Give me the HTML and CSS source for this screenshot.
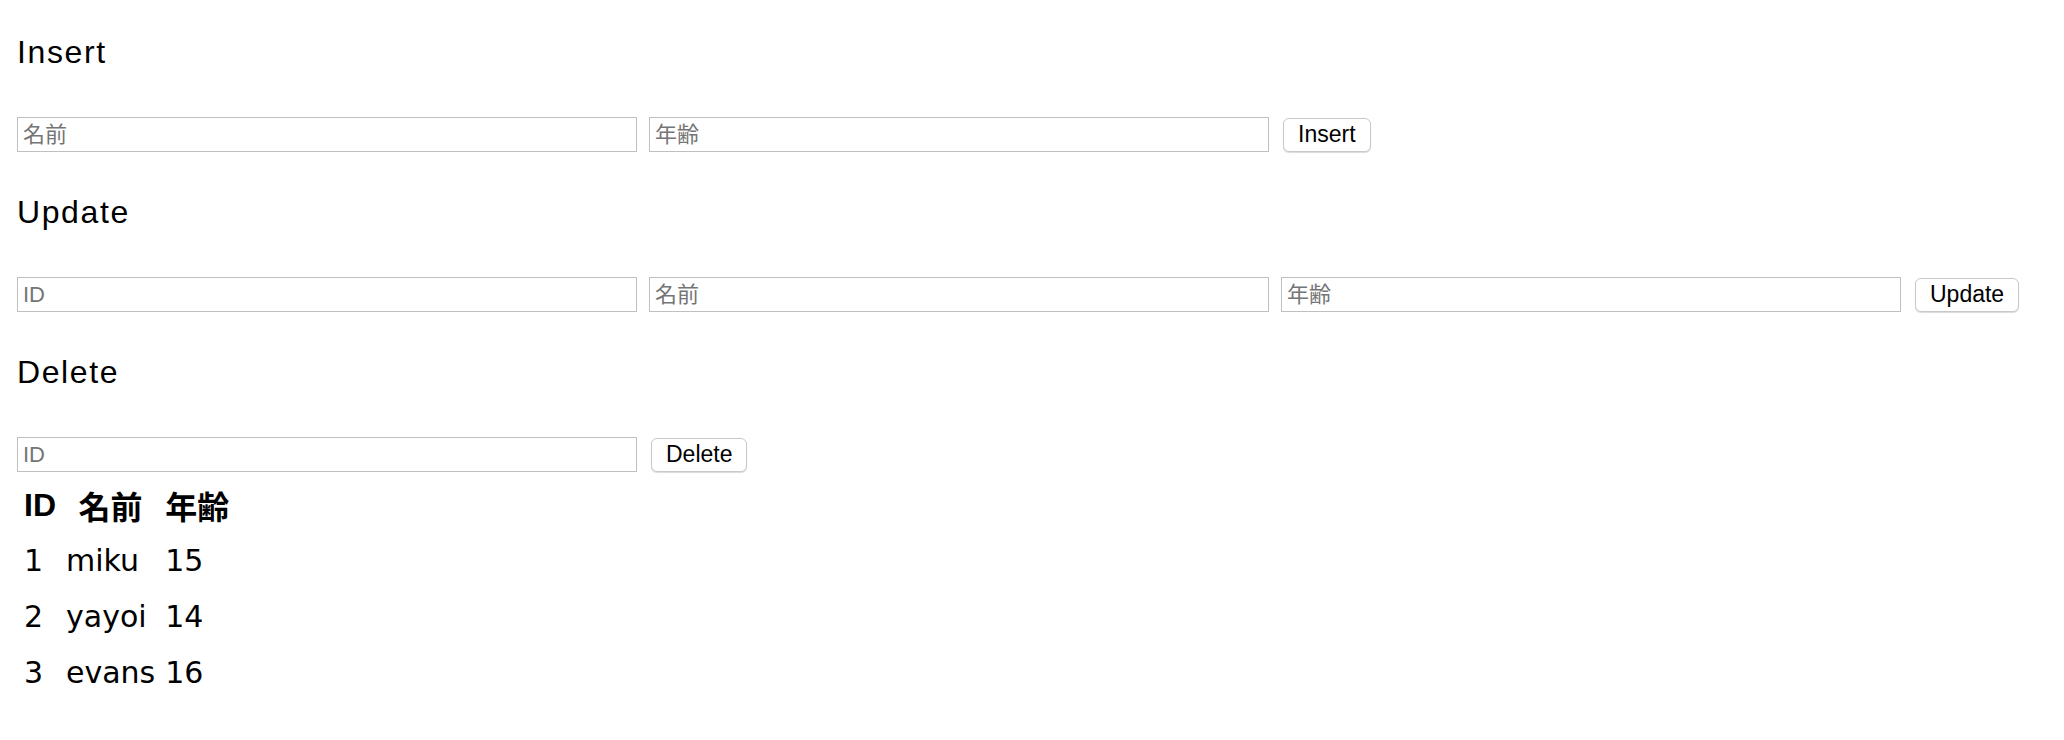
FILE: index.html
```html
<!DOCTYPE html>
<html>
<head>
  <meta charset="utf-8">
  <title>Users</title>
  <link rel="stylesheet" href="styles.css">
</head>
<body>
  <div class="section">
    <h3>Insert</h3>
    <form class="row">
      <input type="text" name="name" placeholder="名前">
      <input type="text" name="age" placeholder="年齢">
      <button type="submit">Insert</button>
    </form>
  </div>
  <div class="section">
    <h3>Update</h3>
    <form class="row">
      <input type="text" name="id" placeholder="ID">
      <input type="text" name="name" placeholder="名前">
      <input type="text" name="age" placeholder="年齢">
      <button type="submit">Update</button>
    </form>
  </div>
  <div class="section">
    <h3>Delete</h3>
    <form class="row">
      <input type="text" name="id" placeholder="ID">
      <button type="submit">Delete</button>
    </form>
  </div>
  <table class="users">
    <tr>
      <th>ID</th>
      <th>名前</th>
      <th>年齢</th>
    </tr>
    <tr>
      <td>1</td>
      <td>miku</td>
      <td>15</td>
    </tr>
    <tr>
      <td>2</td>
      <td>yayoi</td>
      <td>14</td>
    </tr>
    <tr>
      <td>3</td>
      <td>evans</td>
      <td>16</td>
    </tr>
  </table>
</body>
</html>
```

FILE: styles.css
```css
body {
  margin: 0;
  padding: 32px 17px 0;
  font-family: "Liberation Sans", "Noto Sans CJK JP", sans-serif;
  color: #000;
  background: #fff;
}
.section + .section {
  margin-top: 40px;
}
h3 {
  margin: 0;
  font-size: 32px;
  line-height: 40px;
  font-weight: normal;
  letter-spacing: 1.6px;
}
.row {
  display: flex;
  align-items: center;
  gap: 12px;
  margin: 45px 0 0;
}
input {
  width: 620px;
  height: 35px;
  box-sizing: border-box;
  margin: 0;
  padding: 0 5px;
  border: 1px solid #bfbfbf;
  font-family: "Liberation Sans", "Noto Sans CJK JP", sans-serif;
  font-size: 22px;
}
input::placeholder {
  color: #757575;
}
button {
  height: 34px;
  margin-left: 2px;
  padding: 0 14px;
  border: 1px solid #c8c8c8;
  border-radius: 6px;
  background: #fff;
  box-shadow: 0 1px 1px rgba(0, 0, 0, 0.15);
  font-family: "Liberation Sans", sans-serif;
  font-size: 23px;
  color: #000;
}
.users {
  margin-top: 6px;
  border-collapse: separate;
  border-spacing: 4px 0;
  font-family: "DejaVu Sans", "Noto Sans CJK JP", sans-serif;
}
.users th {
  height: 54px;
  padding: 0 3px;
  font-family: "Liberation Sans", "Noto Sans CJK JP", sans-serif;
  font-size: 32px;
  font-weight: bold;
}
.users td {
  height: 56px;
  padding: 0 3px;
  font-size: 30px;
  text-align: left;
}
```
